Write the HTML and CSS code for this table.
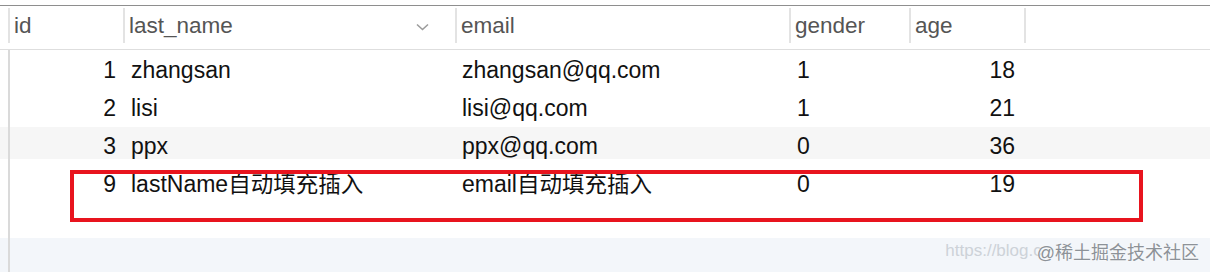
FILE: index.html
```html
<!DOCTYPE html>
<html lang="zh-CN">
<head>
  <meta charset="UTF-8">
  <meta name="viewport" content="width=device-width, initial-scale=1.0">
  <title>user 表数据</title>
  <link rel="stylesheet" href="styles.css">
</head>
<body>
  <div class="sheet">
    <div class="head">
      <div class="hcell">id</div>
      <div class="hcell has-menu">
        <span>last_name</span>
        <svg class="chev" width="13" height="8" viewBox="0 0 13 8"><polyline points="1,1.5 6.5,6.5 12,1.5" fill="none" stroke="#9c9c9c" stroke-width="1.6"/></svg>
      </div>
      <div class="hcell">email</div>
      <div class="hcell">gender</div>
      <div class="hcell">age</div>
      <div class="hcell"></div>
    </div>
    <div class="body">
      <div class="row">
        <div class="c-id">1</div>
        <div class="c-name">zhangsan</div>
        <div class="c-mail">zhangsan@qq.com</div>
        <div class="c-gender">1</div>
        <div class="c-age">18</div>
      </div>
      <div class="row">
        <div class="c-id">2</div>
        <div class="c-name">lisi</div>
        <div class="c-mail">lisi@qq.com</div>
        <div class="c-gender">1</div>
        <div class="c-age">21</div>
      </div>
      <div class="row alt">
        <div class="c-id">3</div>
        <div class="c-name">ppx</div>
        <div class="c-mail">ppx@qq.com</div>
        <div class="c-gender">0</div>
        <div class="c-age">36</div>
      </div>
      <div class="row mark">
        <div class="c-id">9</div>
        <div class="c-name">lastName<span class="cjk">自动填充插入</span></div>
        <div class="c-mail">email<span class="cjk">自动填充插入</span></div>
        <div class="c-gender">0</div>
        <div class="c-age">19</div>
        <div class="highlight"></div>
      </div>
      <div class="spacer"></div>
      <div class="foot">
        <span class="wm-url">https://blog.c</span>
        <span class="wm-name">@稀土掘金技术社区</span>
      </div>
    </div>
  </div>
</body>
</html>
```
FILE: styles.css
```css
body {
  margin: 0;
  background-color: #fff;
  font-family: "Liberation Sans", Arial, "Noto Sans CJK SC", sans-serif;
}
.sheet {
  margin-top: 5px;
  border-top: 1px solid #8e8e8e;
}
.head,
.row {
  display: grid;
  grid-template-columns: 115px 332px 334px 120px 115px 1fr;
  padding-left: 8px;
}
.head {
  height: 43px;
  border-bottom: 1px solid #dedede;
}
.hcell {
  box-sizing: border-box;
  margin-top: 2px;
  height: 35px;
  padding: 1px 0 0 4px;
  border-left: 2px solid #e3e3e3;
  line-height: 34px;
  font-size: 22.5px;
  color: #555;
}
.has-menu {
  display: flex;
  justify-content: space-between;
  align-items: center;
  padding-right: 26px;
}
.chev {
  margin-top: 1px;
}
.body {
  position: relative;
  padding-top: 1px;
}
/* grid line on the left, drawn over the striped rows */
.body::before {
  content: "";
  position: absolute;
  left: 8px;
  top: 0;
  bottom: 0;
  width: 2px;
  background-color: #dadada;
  z-index: 1;
}
.row {
  height: 38px;
  line-height: 38px;
  font-size: 23px;
  color: #111;
}
.row.alt {
  background: linear-gradient(#f6f6f6, #f6f6f6) 0 -1px / 100% 33px no-repeat;
}
.c-id {
  text-align: right;
  padding-right: 7px;
}
.c-name {
  padding-left: 8px;
}
.c-mail {
  padding-left: 7px;
}
.c-gender {
  padding-left: 8px;
}
.c-age {
  text-align: right;
  padding-right: 9px;
}
.cjk {
  font-size: 22.5px;
}
.mark {
  position: relative;
}
.highlight {
  position: absolute;
  left: 70px;
  top: 5px;
  width: 1073px;
  height: 52px;
  box-sizing: border-box;
  border: 4px solid #e8141e;
}
.spacer {
  height: 35px;
}
.foot {
  display: flex;
  justify-content: flex-end;
  align-items: center;
  box-sizing: border-box;
  height: 34px;
  padding: 0 11px 9px 0;
  background-color: #f3f6fa;
}
.wm-url {
  font-size: 17px;
  color: #cdd2d8;
}
.wm-name {
  margin-left: -5px;
  font-size: 18px;
  color: #8d9298;
  text-shadow: 0 0 2px #fff;
}
```
